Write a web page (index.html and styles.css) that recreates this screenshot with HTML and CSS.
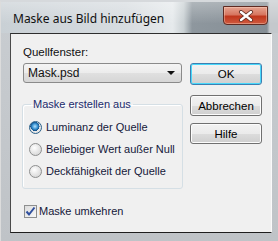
FILE: index.html
```html
<!DOCTYPE html>
<html lang="de">
<head>
    <meta charset="UTF-8">
    <title>Maske aus Bild hinzufügen</title>
    <link rel="stylesheet" href="styles.css">
</head>
<body>
    <div class="window">
        <div class="titlebar">
            <span class="title">Maske aus Bild hinzufügen</span>
            <span class="close">
                <svg width="16" height="12" viewBox="0 0 16 12">
                    <path d="M3 2 L13 10 M13 2 L3 10" stroke="#5a2a20" stroke-width="4" stroke-linecap="round"/>
                    <path d="M3 2 L13 10 M13 2 L3 10" stroke="#fff" stroke-width="2.4" stroke-linecap="round"/>
                </svg>
            </span>
        </div>
        <div class="client">
            <div class="main">
                <div class="left">
                    <div class="field-label">Quellfenster:</div>
                    <div class="select">
                        <span>Mask.psd</span>
                        <span class="arrow"></span>
                    </div>
                    <fieldset class="group">
                        <legend>Maske erstellen aus</legend>
                        <div class="radio"><span class="dot checked"></span>Luminanz der Quelle</div>
                        <div class="radio"><span class="dot"></span>Beliebiger Wert außer Null</div>
                        <div class="radio"><span class="dot"></span>Deckfähigkeit der Quelle</div>
                    </fieldset>
                    <div class="check">
                        <span class="box">
                            <svg width="11" height="11" viewBox="0 0 11 11">
                                <path d="M1.5 5.5 L4 8.5 L9.5 1.5" fill="none" stroke="#2f4f9e" stroke-width="2"/>
                            </svg>
                        </span>
                        Maske umkehren
                    </div>
                </div>
                <div class="buttons">
                    <div class="btn default">OK</div>
                    <div class="btn">Abbrechen</div>
                    <div class="btn">Hilfe</div>
                </div>
            </div>
        </div>
    </div>
</body>
</html>
```

FILE: styles.css
```css
body {
    margin: 0;
    background: #c4c8cc;
}
.window {
    width: 278px;
    height: 241px;
    box-sizing: border-box;
    background: linear-gradient(#c9cdd1, #bfc3c7);
    border-top: 2px solid #d6d9dc;
    border-left: 1px solid #dcdcdc;
    padding: 0 6px 8px 9px;
    display: flex;
    flex-direction: column;
}
.titlebar {
    height: 31px;
    margin: 0 -6px 0 -9px;
    padding: 0 10px 0 12px;
    display: flex;
    align-items: flex-start;
    justify-content: space-between;
    background:
        linear-gradient(to bottom, rgba(255,255,255,0.3), rgba(255,255,255,0) 70%),
        linear-gradient(to right, #c9d0d5 0, #d7dce0 45%, #e6eaec 62%, #c9d0d3 66%, #8e979e 69%, #858e95 96%, #c4c8cc 97%);
}
.title {
    font-family: "Noto Sans", sans-serif;
    font-size: 12px;
    line-height: 16px;
    color: #101010;
    margin-top: 9px;
}
.close {
    width: 45px;
    height: 19px;
    box-sizing: border-box;
    margin-top: 4px;
    border: 1px solid #5e2a22;
    border-radius: 0 0 4px 4px;
    background: linear-gradient(#e6a491 0, #d77660 45%, #c0371d 55%, #cf5a3f 100%);
    box-shadow: inset 0 0 0 1px rgba(255,220,200,0.4);
    display: flex;
    align-items: center;
    justify-content: center;
}
.client {
    flex: 1;
    background: #f0f0f0;
    border-top: 1px solid #2e2e2e;
    border-left: 1px solid #4a4a4a;
    border-bottom: 1px solid #1e1e1e;
    border-right: 1px solid #fafafa;
    font-family: "Liberation Sans", Arial, sans-serif;
    font-size: 11px;
    color: #111;
    padding: 11px 0 0 12px;
}
.main {
    display: grid;
    grid-template-columns: 160px 72px;
    column-gap: 7px;
}
.field-label {
    line-height: 14px;
    margin-bottom: 4px;
    font-size: 11.5px;
}
.select {
    width: 159px;
    height: 20px;
    box-sizing: border-box;
    border: 1px solid #8a8a8a;
    border-radius: 3px;
    background: linear-gradient(#f4f4f4 0, #ececec 50%, #e0e0e0 51%, #d6d6d6 100%);
    display: flex;
    align-items: center;
    justify-content: space-between;
    padding: 0 6px 0 4px;
    font-size: 12px;
}
.arrow {
    width: 0;
    height: 0;
    border-left: 4px solid transparent;
    border-right: 4px solid transparent;
    border-top: 4px solid #111;
}
.group {
    margin: 14px 0 0 -1px;
    width: 161px;
    box-sizing: border-box;
    border: 1px solid #d5dfe5;
    border-radius: 3px;
    padding: 5px 0 6px 6px;
    box-shadow: inset 1px 1px 0 #fff;
}
.group legend {
    color: #1b2b6c;
    padding: 0 2px;
    margin-left: 2px;
    line-height: 14px;
}
.radio {
    height: 22px;
    display: flex;
    align-items: center;
    color: #15183a;
}
.dot {
    width: 13px;
    height: 13px;
    box-sizing: border-box;
    border-radius: 50%;
    border: 1px solid #8e8f8f;
    background: radial-gradient(circle at 40% 35%, #ffffff 0, #e8e8e8 45%, #cfcfcf 100%);
    margin-right: 4px;
    flex: none;
}
.dot.checked {
    border-color: #2c628b;
    background:
        radial-gradient(circle at 45% 40%, #b9e2fb 0, #3a94d3 30%, #0f4c86 50%, rgba(0,0,0,0) 52%),
        radial-gradient(circle, #f3f3f3 0, #dedede 100%);
}
.check {
    margin-top: 11px;
    height: 22px;
    display: flex;
    align-items: center;
    color: #15183a;
}
.box {
    width: 13px;
    height: 13px;
    box-sizing: border-box;
    border: 1px solid #8e8f8f;
    background: linear-gradient(135deg, #dcdcdc, #f8f8f8);
    margin: 0 2px 0 1px;
    display: flex;
    align-items: center;
    justify-content: center;
}
.buttons {
    display: flex;
    flex-direction: column;
    padding-top: 18px;
}
.btn {
    height: 21px;
    box-sizing: border-box;
    border: 1px solid #707070;
    border-radius: 3px;
    background: linear-gradient(#f2f2f2 0, #ebebeb 50%, #dddddd 51%, #cfcfcf 100%);
    box-shadow: inset 0 0 0 1px #fcfcfc;
    display: flex;
    align-items: center;
    justify-content: center;
    font-size: 11.5px;
    color: #000;
    margin-bottom: 7px;
}
.btn.default {
    height: 22px;
    border-color: #3c7fb1;
    box-shadow: inset 0 0 0 1px #48d8fb;
    margin-bottom: 10px;
}
```
